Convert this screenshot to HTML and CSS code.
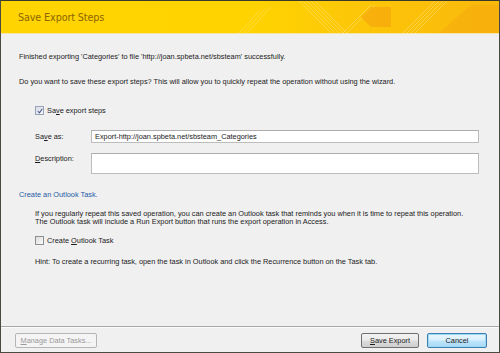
FILE: index.html
```html
<!DOCTYPE html>
<html>
<head>
<meta charset="utf-8">
<link rel="stylesheet" href="styles.css">
</head>
<body>
<div class="dialog">
  <div class="header">
    <div class="title">Save Export Steps</div>
    <svg class="deco" width="260" height="32" viewBox="0 0 260 32">
      <defs>
        <linearGradient id="g" x1="0" x2="1" y1="0" y2="0">
          <stop offset="0" stop-color="#ffd200" stop-opacity="0"/>
          <stop offset="0.4" stop-color="#fdc808"/>
          <stop offset="1" stop-color="#f9b80c"/>
        </linearGradient>
      </defs>
      <rect x="0" y="0" width="260" height="32" fill="url(#g)"/>
      <g stroke="#ffe27a" stroke-width="0.6" fill="none" opacity="0.85">
        <line x1="0" y1="32" x2="20" y2="10"/>
        <line x1="4" y1="32" x2="26" y2="8"/>
        <line x1="8" y1="32" x2="32" y2="6"/>
        <line x1="60" y1="0" x2="92" y2="32"/>
        <line x1="64" y1="0" x2="96" y2="32"/>
        <line x1="68" y1="0" x2="100" y2="32"/>
        <line x1="72" y1="0" x2="104" y2="32"/>
        <line x1="76" y1="0" x2="108" y2="32"/>
        <line x1="104" y1="32" x2="132" y2="4"/>
        <line x1="108" y1="32" x2="136" y2="4"/>
        <line x1="164" y1="32" x2="196" y2="0"/>
        <line x1="168" y1="32" x2="200" y2="0"/>
        <line x1="172" y1="32" x2="204" y2="0"/>
        <line x1="176" y1="32" x2="208" y2="0"/>
      </g>
      <polygon points="122,16 132,6 152,6 152,26 132,26" fill="#f5a20f" opacity="0.6"/>
      <polygon points="200,32 232,4 260,4 260,32" fill="#f6ac0e" opacity="0.6"/>
    </svg>
  </div>

  <div class="content">
    <p class="line p1">Finished exporting 'Categories' to file 'http://joan.spbeta.net/sbsteam' successfully.</p>
    <p class="line p2">Do you want to save these export steps? This will allow you to quickly repeat the operation without using the wizard.</p>

    <div class="check-row c1">
      <span class="box checked">
        <svg width="6" height="6" viewBox="0 0 6 6"><path d="M0.8 3 L2.4 4.8 L5.3 0.8" stroke="#4a5a8a" stroke-width="1.1" fill="none"/></svg>
      </span>
      <span class="label">Sa<u>v</u>e export steps</span>
    </div>

    <div class="field-row r1">
      <span class="flabel">Sa<u>v</u>e as:</span>
      <div class="input">Export-http://joan.spbeta.net/sbsteam_Categories</div>
    </div>
    <div class="field-row r2">
      <span class="flabel"><u>D</u>escription:</span>
      <div class="input tall"></div>
    </div>

    <p class="line link">Create an Outlook Task.</p>

    <p class="para">If you regularly repeat this saved operation, you can create an Outlook task that reminds you when it is time to repeat this operation.<br>The Outlook task will include a Run Export button that runs the export operation in Access.</p>

    <div class="check-row c2">
      <span class="box"></span>
      <span class="label">Create <u>O</u>utlook Task</span>
    </div>

    <p class="line hint">Hint: To create a recurring task, open the task in Outlook and click the Recurrence button on the Task tab.</p>
  </div>

  <div class="footer">
    <button class="btn disabled"><u>M</u>anage Data Tasks...</button>
    <div class="spacer"></div>
    <button class="btn save"><u>S</u>ave Export</button>
    <button class="btn cancel">Cancel</button>
  </div>
</div>
</body>
</html>
```

FILE: styles.css
```css
html, body {
  margin: 0;
  padding: 0;
  background: #f0f0f0;
}

.dialog {
  width: 500px;
  height: 353px;
  box-sizing: border-box;
  border: 1px solid #4a4a42;
  border-top-color: #3a3a2c;
  background: #f0f0f0;
  display: flex;
  flex-direction: column;
  font-family: "Liberation Sans", Arial, sans-serif;
  font-size: 7.35px;
  color: #1a1a1a;
  overflow: hidden;
}

.header {
  height: 32px;
  flex: none;
  background: linear-gradient(to right, #ffd400 0%, #ffd300 50%, #fbc30a 100%);
  display: flex;
  align-items: center;
  justify-content: space-between;
  border-bottom: 1px solid #f3e6a8;
}

.title {
  font-family: "DejaVu Sans", sans-serif;
  font-size: 9.6px;
  color: #8c6400;
  padding-left: 17px;
  letter-spacing: -0.1px;
}

.deco {
  flex: none;
  display: block;
}

.content {
  padding-left: 18px;
  padding-right: 20px;
  display: flex;
  flex-direction: column;
}

.line {
  margin: 0;
  line-height: 9px;
  white-space: nowrap;
}

.p1 { margin-top: 18px; }
.p2 { margin-top: 16px; }

.check-row {
  display: flex;
  align-items: center;
  gap: 3px;
  padding-left: 16px;
  height: 9px;
  line-height: 9px;
}

.c1 { margin-top: 20px; }
.c2 { margin-top: 10px; }

.box {
  width: 7px;
  height: 7px;
  border: 1px solid #8e8f8f;
  background: linear-gradient(135deg, #dcdcdc, #fafafa);
  display: flex;
  align-items: center;
  justify-content: center;
  flex: none;
}

.box.checked {
  border-color: #9aa4b8;
  background: linear-gradient(135deg, #d8dde8, #f6f7fa);
}

.box svg { display: block; }

.field-row {
  display: flex;
  align-items: flex-start;
  padding-left: 16px;
}

.r1 { margin-top: 15px; }
.r2 { margin-top: 10px; }

.flabel {
  width: 56px;
  flex: none;
  line-height: 13px;
}

.r2 .flabel { line-height: 9px; padding-top: 1px; }

.input {
  width: 389px;
  height: 13px;
  box-sizing: border-box;
  border: 1px solid #bcbcbc;
  border-top-color: #adadad;
  background: #fff;
  padding-left: 3px;
  line-height: 11px;
  white-space: nowrap;
}

.input.tall {
  height: 21px;
}

.link {
  color: #1e5aa5;
  margin-top: 16px;
}

.para {
  margin: 11px 0 0 0;
  padding-left: 16px;
  line-height: 8px;
  white-space: nowrap;
}

.hint {
  margin-top: 12px;
  padding-left: 16px;
}

.footer {
  margin-top: auto;
  border-top: 1px solid #a8a8a8;
  box-shadow: inset 0 1px 0 #fbfbfb;
  display: flex;
  align-items: center;
  gap: 8px;
  padding: 6px 12px 4px 14px;
  height: 26px;
  box-sizing: border-box;
}

.spacer { flex: 1; }

.btn {
  font-family: "Liberation Sans", Arial, sans-serif;
  font-size: 7.35px;
  color: #1a1a1a;
  height: 15px;
  padding: 0;
  border: 1px solid #707070;
  border-radius: 2px;
  background: linear-gradient(to bottom, #f2f2f2 0%, #ebebeb 48%, #dddddd 52%, #cfcfcf 100%);
  box-sizing: border-box;
}

.btn.disabled {
  width: 82px;
  color: #9a9a9a;
  border-color: #b5b5b5;
  background: #f4f4f4;
}

.btn.save { width: 58px; }

.btn.cancel {
  width: 60px;
  border-color: #3c7fb1;
  box-shadow: inset 0 0 0 1px #9fd8f5;
  background: linear-gradient(to bottom, #eaf6fd 0%, #d9f0fc 48%, #bee6fd 52%, #a7d9f5 100%);
}
```
